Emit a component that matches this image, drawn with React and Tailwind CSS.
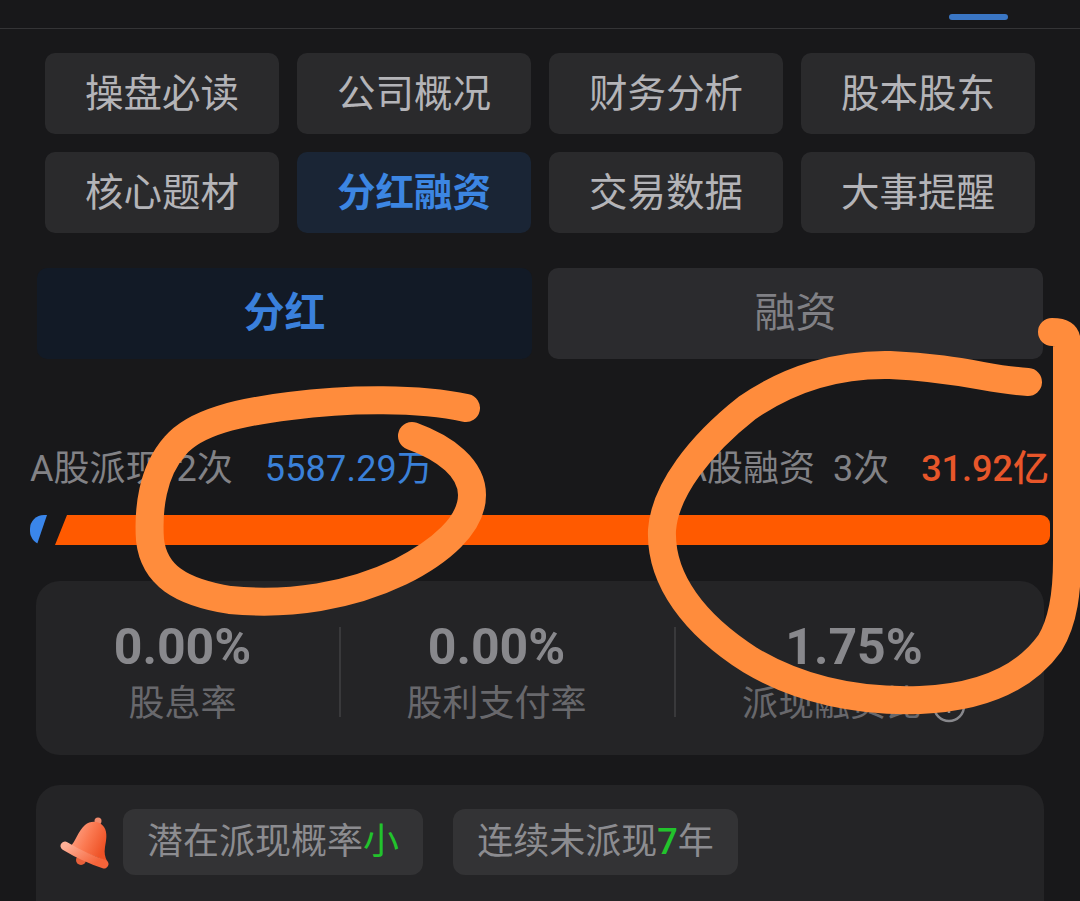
const FONT = "font-['Roboto','Noto_Sans_CJK_SC',sans-serif]";

const MENU = [
  { label: '操盘必读' },
  { label: '公司概况' },
  { label: '财务分析' },
  { label: '股本股东' },
  { label: '核心题材' },
  { label: '分红融资', active: true },
  { label: '交易数据' },
  { label: '大事提醒' },
];

function Bell() {
  return (
    <svg width="50" height="52" viewBox="0 0 50 52" className="ml-[2px] shrink-0">
      <defs>
        <linearGradient id="bellBody" x1="0" y1="0" x2="1" y2="0.5">
          <stop offset="0" stopColor="#ffb097" />
          <stop offset="0.55" stopColor="#fb7a52" />
          <stop offset="1" stopColor="#ee5226" />
        </linearGradient>
        <linearGradient id="bellRim" x1="0" y1="0" x2="1" y2="0.6">
          <stop offset="0" stopColor="#ffb097" />
          <stop offset="1" stopColor="#f5643a" />
        </linearGradient>
      </defs>
      <ellipse cx="21" cy="43" rx="5" ry="5" fill="#e8603a" />
      <circle cx="38" cy="4" r="3.5" fill="#f08a6c" />
      <path d="M10 30 C16 24 18 14 25 8 C31 3 40 4 44 10 C48 16 46 24 45 30 C44 36 45 40 47 44 Z" fill="url(#bellBody)" />
      <path d="M5 29 Q25 41 44 47" fill="none" stroke="url(#bellRim)" strokeWidth="9" strokeLinecap="round" />
    </svg>
  );
}

function Stat({ value, label, info, className }) {
  return (
    <div className={`flex flex-col items-center pt-[10px] ${className}`}>
      <div className="text-[50px] leading-[58px] font-bold text-[#88888c]">{value}</div>
      <div className="mt-[3px] flex items-center text-[36px] leading-[50px] text-[#68686c]">
        {label}
        {info && (
          <svg width="34" height="34" viewBox="0 0 34 34" className="ml-[10px] mt-[4px]" fill="none" stroke="#88888c" strokeWidth="2.5">
            <circle cx="17" cy="17" r="15" />
            <path d="M17 10v1M17 15v9" />
          </svg>
        )}
      </div>
    </div>
  );
}

export default function App() {
  return (
    <div className={`relative h-[901px] w-[1080px] overflow-hidden bg-[#18181a] ${FONT}`}>
      <div className="flex h-[29px] justify-end border-b border-[#343436] pr-[72px] pt-[14px]">
        <div className="h-[6px] w-[59px] rounded-full bg-[#3a76c4]" />
      </div>

      <div className="grid grid-cols-4 gap-[18px] px-[45px] pt-[24px]">
        {MENU.map((m) => (
          <div
            key={m.label}
            className={`flex h-[81px] items-center justify-center rounded-[10px] text-[38.5px] ${
              m.active ? 'bg-[#1a2535] font-bold text-[#3c86e2]' : 'bg-[#2a2a2c] text-[#b4b4b8]'
            }`}
          >
            {m.label}
          </div>
        ))}
      </div>

      <div className="flex gap-[16px] pl-[37px] pr-[37px] pt-[35px]">
        <div className="flex h-[91px] w-[495px] items-center justify-center rounded-[10px] bg-[#121a26] text-[41px] font-bold text-[#3a80dc]">
          分红
        </div>
        <div className="flex h-[91px] w-[495px] items-center justify-center rounded-[10px] bg-[#2b2b2e] text-[41px] text-[#808085]">
          融资
        </div>
      </div>

      <div className="flex items-center justify-between pl-[30px] pr-[31px] pt-[87px] text-[36px] leading-[46px] text-[#828286]">
        <div className="flex">
          <span>A股派现</span>
          <span className="ml-[15px]">2次</span>
          <span className="ml-[32px] tracking-[0.2px] text-[#3a80d8]">5587.29万</span>
        </div>
        <div className="flex">
          <span>A股融资</span>
          <span className="ml-[18px]">3次</span>
          <span className="ml-[32px] font-medium text-[#e8562a]">31.92亿</span>
        </div>
      </div>

      <div className="mx-[30px] mt-[23px] flex h-[30px] gap-[8px]">
        <div className="h-full w-[17px] rounded-l-[14px] bg-[#3a86ea] [clip-path:polygon(0_0,100%_0,40%_100%,0_100%)]" />
        <div className="h-full flex-1 rounded-r-[9px] bg-[#ff5a00] [clip-path:polygon(12px_0,100%_0,100%_100%,0_100%)]" />
      </div>

      <div className="mx-[36px] mt-[36px] flex h-[174px] items-center rounded-[24px] bg-[#242426]">
        <Stat value="0.00%" label="股息率" className="w-[303px] pr-[10px]" />
        <div className="mt-[7px] h-[90px] w-[2px] bg-[#39393b]" />
        <Stat value="0.00%" label="股利支付率" className="w-[333px] pr-[22px]" />
        <div className="mt-[7px] h-[90px] w-[2px] bg-[#39393b]" />
        <Stat value="1.75%" label="派现融资比" info className="flex-1 pr-[12px]" />
      </div>

      <div className="mx-[36px] mt-[30px] flex h-[140px] items-start gap-[13px] rounded-[24px] bg-[#242426] pl-[22px] pt-[24px]">
        <div className="pt-[8px]">
          <Bell />
        </div>
        <div className="flex h-[66px] w-[300px] items-center justify-center rounded-[12px] bg-[#333335] text-[36px] text-[#8c8c90]">
          潜在派现概率<span className="text-[#22c32c]">小</span>
        </div>
        <div className="ml-[17px] flex h-[66px] w-[285px] items-center justify-center rounded-[12px] bg-[#333335] text-[36px] text-[#8c8c90]">
          连续未派现<span className="font-medium text-[#22c32c]">7</span>年
        </div>
      </div>

      {/* hand drawn marks on top of the screenshot */}
      <svg width="1080" height="901" viewBox="0 0 1080 901" fill="none" stroke="#ff8c3c" strokeWidth="28" strokeLinecap="round" strokeLinejoin="round" className="pointer-events-none absolute left-0 top-0">
        <path d="M466 408 C420 398 350 398 290 406 C240 412 195 422 175 446 C152 472 148 510 150 540 C154 575 180 592 230 600 C290 606 350 596 400 572 C440 552 472 525 472 495 C472 468 445 448 412 436" />
        <path d="M1028 382 C990 380 960 368 890 365 C840 364 790 378 747 408 C700 445 665 490 662 530 C660 580 695 625 750 660 C800 690 860 702 920 700 C970 698 1020 685 1050 643 C1064 620 1067 590 1067 560 L1067 345 C1067 334 1062 332 1052 332" />
      </svg>
    </div>
  );
}
